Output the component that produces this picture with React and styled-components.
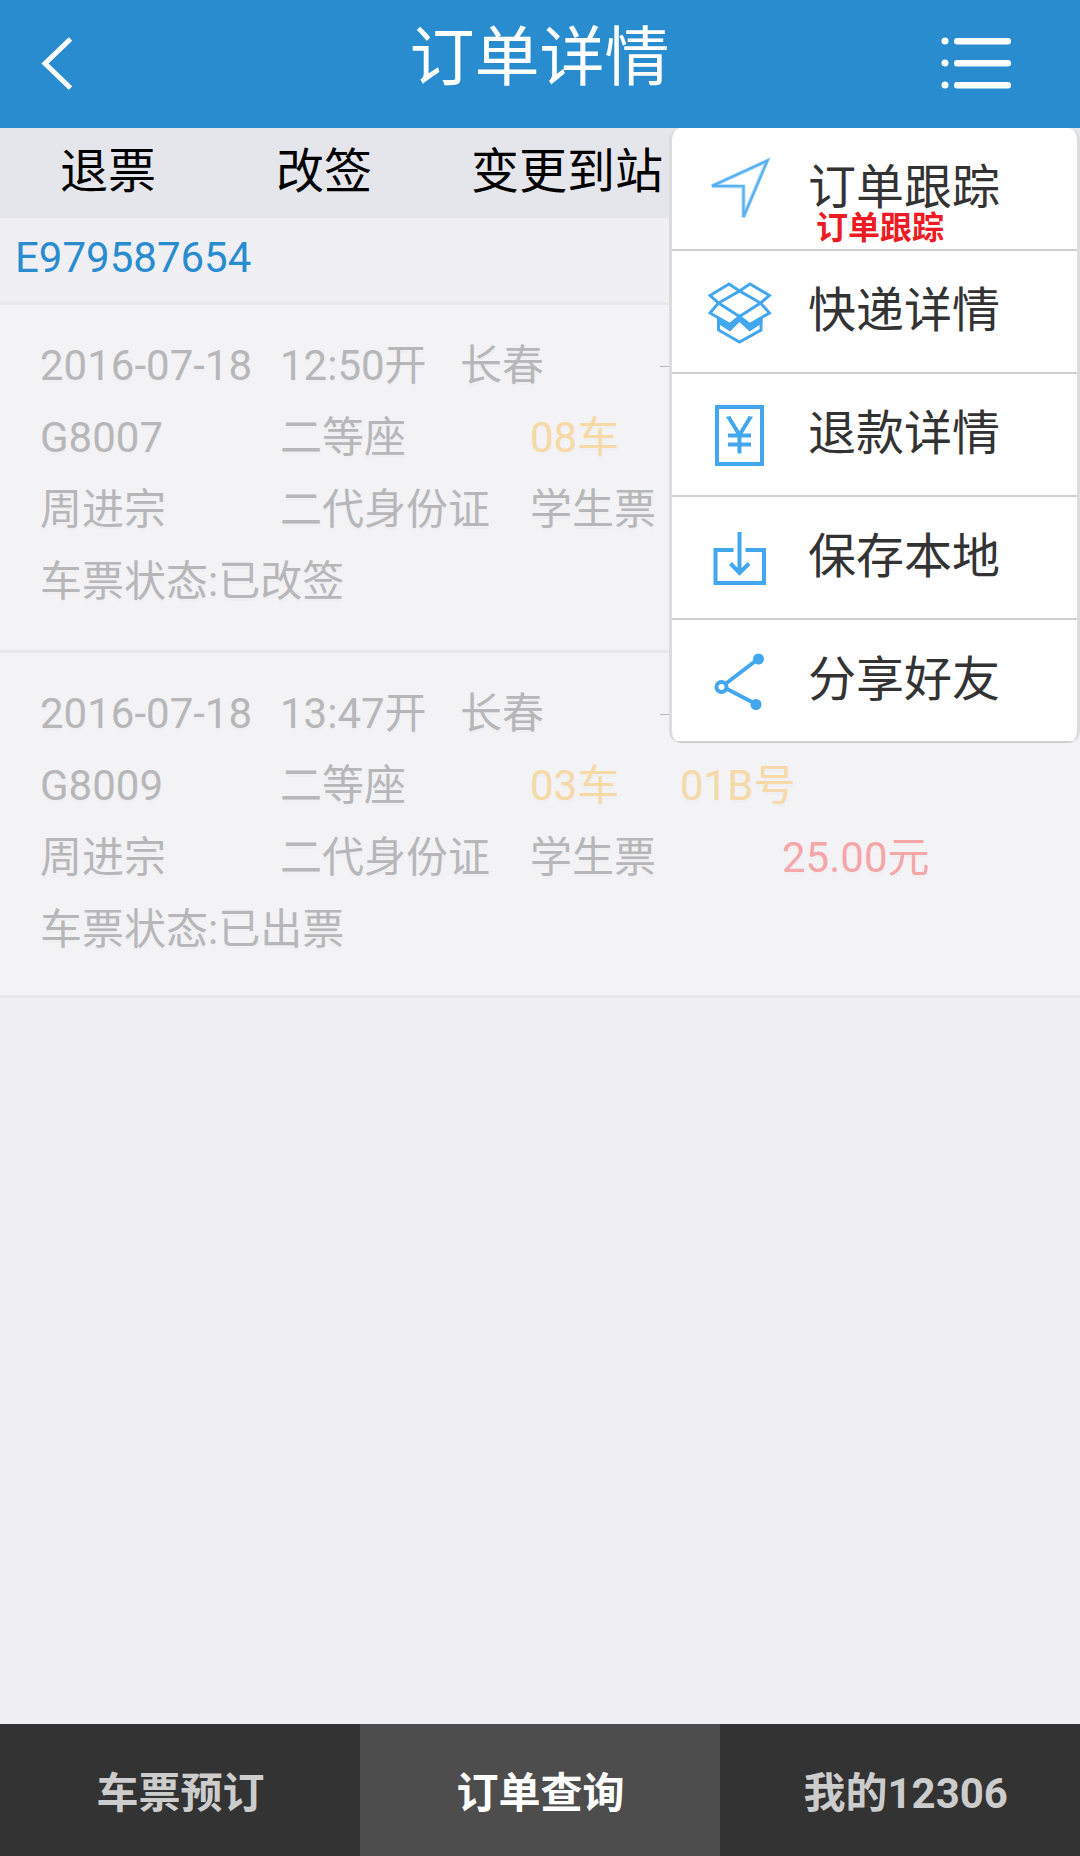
import React from "react";
import styled, { createGlobalStyle } from "styled-components";

const Global = createGlobalStyle`
  *, *::before, *::after { box-sizing: border-box; }
  body {
    margin: 0;
    background: #efeff4;
    font-family: Roboto, "Noto Sans CJK SC", sans-serif;
    color: #333;
  }
  button, a { font: inherit; color: inherit; }
  button { border: 0; padding: 0; background: none; cursor: pointer; }
  a { text-decoration: none; }
`;

const Page = styled.div`
  display: flex;
  flex-direction: column;
  min-height: 100vh;
`;

const Header = styled.header`
  position: relative;
  z-index: 1;
  display: grid;
  grid-template-columns: 1fr auto 1fr;
  height: 128px;
  padding: 0 69px 0 40px;
  background: #298ccf;
  color: #fff;
`;

const Title = styled.h1`
  margin: 0;
  padding-left: 28px;
  font-size: 65px;
  font-weight: 400;
  line-height: 117px;
`;

const HeaderButton = styled.button`
  display: flex;
  align-items: center;
  justify-self: ${(p) => p.$side};
  padding-bottom: 2px;
`;

const Menu = styled.nav`
  position: absolute;
  top: 100%;
  right: 0;
  width: 411px;
  border: solid #dcdcdc;
  border-width: 0 3px;
  border-radius: 12px;
  background: #fff;
  color: #333;
  overflow: hidden;
`;

const MenuItem = styled.button`
  position: relative;
  display: flex;
  align-items: center;
  gap: 36px;
  width: 100%;
  height: 123px;
  padding-left: 36px;
  border-bottom: 2px solid #cfcfd1;
  font-size: 48px;
  line-height: 60px;
`;

const MenuLabel = styled.span`
  padding-bottom: 2px;
`;

const Annotation = styled.span`
  position: absolute;
  left: 144px;
  top: 80px;
  color: #ed1c24;
  font-size: 32px;
  font-weight: 700;
  line-height: 40px;
`;

const Actions = styled.div`
  display: grid;
  grid-template-columns: 20% 20% 25%;
  height: 90px;
  background: #e5e6eb;
`;

const Action = styled.button`
  padding-bottom: 2px;
  color: #000;
  font-size: 48px;
  line-height: 60px;
  white-space: nowrap;
`;

const OrderNumber = styled.h2`
  margin: 0;
  height: 87px;
  padding: 0 15px;
  border-bottom: 3px solid #e8e8eb;
  color: #298ccf;
  font-size: 42px;
  font-weight: 400;
  line-height: 80px;
`;

const Ticket = styled.section`
  padding: 25px 40px 32px;
  border-bottom: 3px solid #e8e8eb;
  background: #f3f3f6;
  color: #b7b7b9;
  font-size: 42px;
  line-height: 72px;
  text-shadow: 0 3px 0 #f0f0f3;

  &:last-child { padding-bottom: 29px; }
`;

const Row = styled.div`
  display: flex;
  align-items: center;
  height: 72px;
  white-space: nowrap;
`;

const tones = { seat: "#f5d9a6", price: "#f5a6a9" };

const Cell = styled.span`
  flex: none;
  width: ${(p) => (p.$w ? p.$w + "px" : "auto")};
  color: ${(p) => tones[p.$tone] || "inherit"};
`;

const RouteLine = styled.span`
  width: 120px;
  height: 1px;
  background: #b7b7b9;
`;

const TabBar = styled.nav`
  display: grid;
  grid-template-columns: repeat(3, 1fr);
  height: 132px;
  margin-top: auto;
  background: #333;
`;

const Tab = styled.a`
  display: flex;
  align-items: center;
  justify-content: center;
  padding: 7px 0 0 1px;
  background: ${(p) => (p.$active ? "#4d4d4d" : "#333")};
  color: ${(p) => (p.$active ? "#fff" : "#ccc")};
  font-size: 42px;
  font-weight: 700;
  line-height: 60px;
`;

const Drawing = styled.svg`
  flex: none;
  display: block;
  fill: none;
  stroke: #42a7ee;
  stroke-width: ${(p) => p.$weight || 3};
`;

const Icon = ({ weight, children }) => (
  <Drawing width="64" height="64" viewBox="0 0 64 64" $weight={weight} aria-hidden="true">
    {children}
  </Drawing>
);

const TrackIcon = () => (
  <Icon weight={2}>
    <path d="M59 4 4 29 35.500 29.500V60Z" stroke="#a9d6f7" strokeWidth="4" />
    <path d="M59.500 3.500 4 29H35.500V60Z" stroke="#55aff0" />
  </Icon>
);

const ParcelIcon = () => (
  <Icon weight={3}>
    <path d="M21 4 2 15.500 10.500 23 2 33 22 44.500 31.500 36.500 41.500 44.500 61.500 33 52.500 23 61.500 15.500 42 4 31.500 11Z" />
    <path d="M31.500 11 10.500 23 31.500 36.500 52.500 23Z" />
    <path d="M10.500 38V50L31.500 62 53 50V38" />
    <path d="M9 37 22 44 31.500 36 41.500 44 54.500 37V43L41.500 51.500 31.500 42 22 51.500 9 43Z" fill="#42a7ee" stroke="none" />
  </Icon>
);

const RefundIcon = () => (
  <Icon weight={4}>
    <path d="M9 4H54V61H9ZM20.500 14 31.500 32 42.500 14M31.500 31V50.500M20 32.500H43M20 41.500H43" />
    <path d="M18.500 14.500H23M40 14.500H44.500" strokeWidth="2" />
  </Icon>
);

const SaveIcon = () => (
  <Icon weight={4}>
    <path d="M25.500 24H7.500V57H56V24H37.500M31.500 6V47M22.500 37.500 31.500 47 41 37.500" />
  </Icon>
);

const ShareIcon = () => (
  <Icon weight={4}>
    <path d="M50 10 18 34.500M48 55 19 40" />
    <circle cx="13.500" cy="38" r="5" />
    <circle cx="50.500" cy="10" r="5.500" fill="#42a7ee" stroke="none" />
    <circle cx="48" cy="55.500" r="5.500" fill="#42a7ee" stroke="none" />
  </Icon>
);

const menuItems = [
  { label: "订单跟踪", icon: TrackIcon, note: "订单跟踪" },
  { label: "快递详情", icon: ParcelIcon },
  { label: "退款详情", icon: RefundIcon },
  { label: "保存本地", icon: SaveIcon },
  { label: "分享好友", icon: ShareIcon },
];

const tickets = [
  { date: "2016-07-18", time: "12:50开", from: "长春", train: "G8007", coach: "08车", status: "已改签" },
  {
    date: "2016-07-18",
    time: "13:47开",
    from: "长春",
    train: "G8009",
    coach: "03车",
    seat: "01B号",
    price: "25.00元",
    status: "已出票",
  },
];

export default function App() {
  return (
    <Page>
      <Global />
      <Header>
        <HeaderButton $side="start" aria-label="返回">
          <svg width="36" height="56" viewBox="0 0 36 56" fill="none" stroke="#fff" strokeWidth="5">
            <path d="M30.500 4 5 28.500 30.500 53" />
          </svg>
        </HeaderButton>
        <Title>订单详情</Title>
        <HeaderButton $side="end" aria-label="菜单" aria-expanded="true">
          <svg width="70" height="52" viewBox="0 0 70 52" fill="#fff">
            {[4, 26, 48].map((y) => (
              <g key={y}>
                <circle cx="4" cy={y} r="3.500" />
                <rect x="13" y={y - 3} width="57" height="6.500" rx="3" />
              </g>
            ))}
          </svg>
        </HeaderButton>
        <Menu>
          {menuItems.map(({ label, icon: Glyph, note }) => (
            <MenuItem key={label}>
              <Glyph />
              <MenuLabel>{label}</MenuLabel>
              {note && <Annotation>{note}</Annotation>}
            </MenuItem>
          ))}
        </Menu>
      </Header>

      <main>
        <Actions>
          <Action>退票</Action>
          <Action>改签</Action>
          <Action>变更到站</Action>
        </Actions>
        <OrderNumber>E979587654</OrderNumber>
        {tickets.map((t) => (
          <Ticket key={t.train}>
            <Row>
              <Cell $w={240}>{t.date}</Cell>
              <Cell $w={180}>{t.time}</Cell>
              <Cell $w={200}>{t.from}</Cell>
              <RouteLine />
            </Row>
            <Row>
              <Cell $w={240}>{t.train}</Cell>
              <Cell $w={250}>二等座</Cell>
              <Cell $w={150} $tone="seat">{t.coach}</Cell>
              {t.seat && <Cell $tone="seat">{t.seat}</Cell>}
            </Row>
            <Row>
              <Cell $w={240}>周进宗</Cell>
              <Cell $w={250}>二代身份证</Cell>
              <Cell $w={252}>学生票</Cell>
              {t.price && <Cell $tone="price">{t.price}</Cell>}
            </Row>
            <Row>
              <Cell>车票状态:{t.status}</Cell>
            </Row>
          </Ticket>
        ))}
      </main>

      <TabBar>
        <Tab href="#book">车票预订</Tab>
        <Tab href="#orders" $active aria-current="page">订单查询</Tab>
        <Tab href="#mine">&nbsp;我的12306</Tab>
      </TabBar>
    </Page>
  );
}
